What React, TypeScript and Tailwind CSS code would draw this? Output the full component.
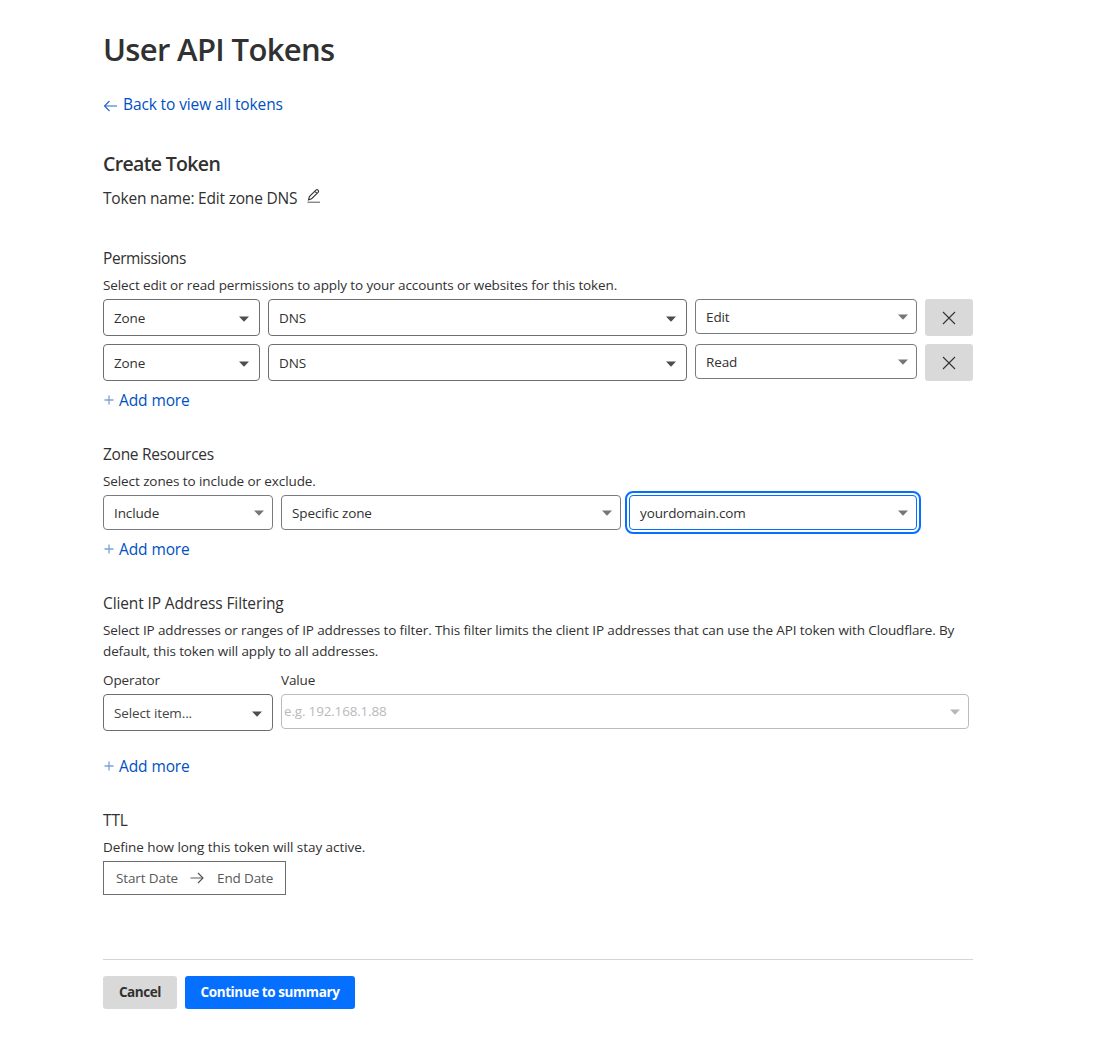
import type { ReactNode } from "react";

function Caret({ className }: { className: string }) {
  return (
    <svg width="10" height="6" viewBox="0 0 10 6" className={`shrink-0 ${className}`}>
      <path d="M0 0.5H10L5 5.8Z" fill="currentColor" />
    </svg>
  );
}

function TallSelect({ label, width, tone = "" }: { label: string; width: string; tone?: string }) {
  return (
    <div className={`flex h-[37px] items-center justify-between rounded-[4px] border border-[#6d6e70] pl-[10px] pr-[10px] ${width}`}>
      <span className={`pt-px ${tone}`}>{label}</span>
      <Caret className="mt-[2px] text-[#4d4d4d]" />
    </div>
  );
}

function ShortSelect({ label, width, focused = false }: { label: string; width: string; focused?: boolean }) {
  const tone = focused
    ? "border-[#056fff] outline-2 outline-offset-2 outline-[#056fff]"
    : "border-[#797b80]";
  return (
    <div className={`flex h-[35px] items-center justify-between rounded-[4px] border pl-[10px] pr-[8px] ${tone} ${width}`}>
      <span className="pt-px">{label}</span>
      <Caret className="text-[#72777b]" />
    </div>
  );
}

function RemoveButton() {
  return (
    <button aria-label="Remove" className="flex h-[37px] w-12 items-center justify-center rounded-[3px] bg-[#d9d9d9]">
      <svg width="14" height="14" viewBox="0 0 14 14" className="mt-px" stroke="#333" strokeWidth="1.1" fill="none">
        <path d="M1 1L13 13M13 1L1 13" />
      </svg>
    </button>
  );
}

function AddMore({ className }: { className: string }) {
  return (
    <a className={`flex h-6 items-center text-[15.5px] leading-6 text-[#0051c3] ${className}`}>
      <svg width="10" height="10" viewBox="0 0 10 10" className="ml-px mr-[5px]" fill="none">
        <path d="M5 0.5V9.5M0.5 5H9.5" stroke="#7ba1df" strokeWidth="1.3" />
      </svg>
      <span className="tracking-[-0.1px]">Add more</span>
    </a>
  );
}

function Heading({ children, className = "" }: { children: ReactNode; className?: string }) {
  return <h3 className={`h-6 text-[15.5px] leading-6 ${className}`}>{children}</h3>;
}

function Hint({ children, className = "" }: { children: ReactNode; className?: string }) {
  return <p className={`mb-[3px] mt-[5px] whitespace-nowrap leading-[21px] ${className}`}>{children}</p>;
}

export default function App() {
  return (
    <div className="h-[1041px] bg-white font-['Open_Sans',sans-serif] text-[13.5px] tracking-[-0.12px] text-[#313131]">
      <main className="ml-[103px] w-[870px] pt-[29px]">
        <h1 className="h-10 text-[31px] font-semibold leading-10 tracking-[-0.66px]">User API Tokens</h1>

        <a className="mt-[23px] flex h-6 items-center text-[15.5px] leading-6 text-[#0051c3]">
          <svg width="15" height="12" viewBox="0 0 15 12" className="mr-[5px] mt-[3px]" fill="none">
            <path d="M1.5 6H14" stroke="#5588d8" strokeWidth="1.3" />
            <path d="M6.5 1L1.5 6L6.5 11" stroke="#1f63c9" strokeWidth="1.1" />
          </svg>
          <span>Back to view all tokens</span>
        </a>

        <h2 className="mt-[33px] h-[30px] text-[19.5px] font-semibold leading-[30px] tracking-[-0.66px]">Create Token</h2>
        <div className="mt-[7px] flex h-6 text-[15.5px] leading-6 tracking-[-0.2px]">
          Token name: Edit zone DNS
          <svg width="14" height="14" viewBox="0 0 14 14" className="ml-[10px] mt-[3px]" fill="none">
            <path d="M0.5 13.3H13" stroke="#8b8b8b" strokeWidth="1.5" />
            <path d="M1.5 10.8L2.4 7.5L8.9 1.1C9.6 0.5 10.4 0.6 11 1.1C11.7 1.8 11.7 2.6 11.1 3.3L4.6 9.7L1.5 10.8ZM7.8 2.3L10 4.4" stroke="#333" strokeWidth="1.1" />
          </svg>
        </div>

        <Heading className="mt-9 tracking-[-0.42px]">Permissions</Heading>
        <Hint className="tracking-[-0.11px]">Select edit or read permissions to apply to your accounts or websites for this token.</Hint>
        <div className="flex flex-col gap-2">
          {["Edit", "Read"].map((access) => (
            <div key={access} className="flex items-start gap-2">
              <TallSelect label="Zone" width="w-[157px]" />
              <TallSelect label="DNS" width="w-[419px]" />
              <ShortSelect label={access} width="w-[222px]" />
              <RemoveButton />
            </div>
          ))}
        </div>
        <AddMore className="mt-[7px]" />

        <Heading className="mt-[30px] tracking-[-0.28px]">Zone Resources</Heading>
        <Hint className="tracking-[-0.09px]">Select zones to include or exclude.</Hint>
        <div className="flex gap-2">
          <ShortSelect label="Include" width="w-[170px]" />
          <ShortSelect label="Specific zone" width="w-[340px]" />
          <ShortSelect label="yourdomain.com" width="w-[288px]" focused />
        </div>
        <AddMore className="mt-[7px]" />

        <Heading className="mt-[30px]">Client IP Address Filtering</Heading>
        <p className="mt-[5px] whitespace-nowrap leading-[21px]">
          Select IP addresses or ranges of IP addresses to filter. This filter limits the client IP addresses that can use the API token with Cloudflare. By
          <br />
          default, this token will apply to all addresses.
        </p>
        <div className="mt-2 flex gap-2">
          <div>
            <div className="mb-[3px] leading-[21px]">Operator</div>
            <TallSelect label="Select item..." width="w-[170px]" tone="text-[#454545]" />
          </div>
          <div>
            <div className="mb-[3px] leading-[21px]">Value</div>
            <div className="flex h-[35px] w-[688px] items-center justify-between rounded-[4px] border border-[#bcbcbc] pl-[2px] pr-[8px] text-[#bababa]">
              <span className="pb-px tracking-[-0.18px]">e.g. 192.168.1.88</span>
              <Caret className="text-[#b4b6b8]" />
            </div>
          </div>
        </div>
        <AddMore className="mt-[23px]" />

        <Heading className="mt-[30px]">TTL</Heading>
        <Hint className="tracking-[-0.06px]">Define how long this token will stay active.</Hint>
        <div className="flex h-[34px] w-[183px] items-center border border-[#6d6e70] pl-3 text-[#595959]">
          <span className="w-[73px]">Start Date</span>
          <svg width="15" height="12" viewBox="0 0 15 12" className="mr-[13px]" fill="none">
            <path d="M1.5 6H14" stroke="#8a8a8a" strokeWidth="1.4" />
            <path d="M9 1L14 6L9 11" stroke="#4d4d4d" strokeWidth="1.1" />
          </svg>
          End Date
        </div>

        <div className="mt-16 flex gap-2 border-t border-[#d5d5d5] pt-4 font-bold">
          <button className="h-[33px] w-[74px] rounded-[3px] bg-[#d9d9d9] tracking-[-0.42px]">Cancel</button>
          <button className="h-[33px] w-[170px] rounded-[3px] bg-[#056fff] tracking-[-0.42px] text-white">Continue to summary</button>
        </div>
      </main>
    </div>
  );
}
